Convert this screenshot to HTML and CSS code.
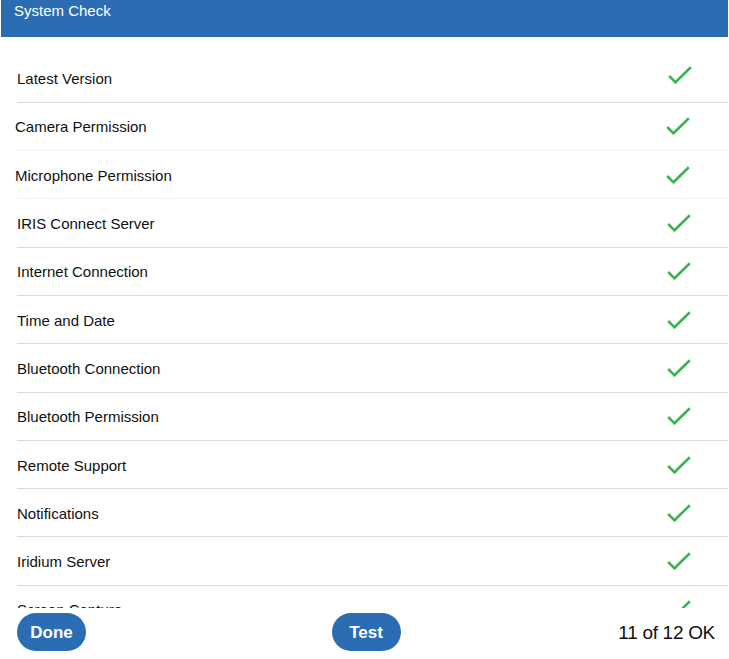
FILE: index.html
```html
<!DOCTYPE html>
<html lang="en">
<head>
<meta charset="utf-8">
<title>System Check</title>
<link rel="stylesheet" href="styles.css">
</head>
<body>
<div class="screen">
  <header class="titlebar"><span class="title">System Check</span></header>
  <ul class="checks">
    <li class="check-row first"><span class="label">Latest Version</span><svg class="tick" viewBox="0 0 24 18"><polyline points="1.2,10 7.5,16.3 22.8,1.2"/></svg></li>
    <li class="check-row shifted faint"><span class="label">Camera Permission</span><svg class="tick" viewBox="0 0 24 18"><polyline points="1.2,10 7.5,16.3 22.8,1.2"/></svg></li>
    <li class="check-row shifted faint"><span class="label">Microphone Permission</span><svg class="tick" viewBox="0 0 24 18"><polyline points="1.2,10 7.5,16.3 22.8,1.2"/></svg></li>
    <li class="check-row"><span class="label">IRIS Connect Server</span><svg class="tick" viewBox="0 0 24 18"><polyline points="1.2,10 7.5,16.3 22.8,1.2"/></svg></li>
    <li class="check-row"><span class="label">Internet Connection</span><svg class="tick" viewBox="0 0 24 18"><polyline points="1.2,10 7.5,16.3 22.8,1.2"/></svg></li>
    <li class="check-row"><span class="label">Time and Date</span><svg class="tick" viewBox="0 0 24 18"><polyline points="1.2,10 7.5,16.3 22.8,1.2"/></svg></li>
    <li class="check-row"><span class="label">Bluetooth Connection</span><svg class="tick" viewBox="0 0 24 18"><polyline points="1.2,10 7.5,16.3 22.8,1.2"/></svg></li>
    <li class="check-row"><span class="label">Bluetooth Permission</span><svg class="tick" viewBox="0 0 24 18"><polyline points="1.2,10 7.5,16.3 22.8,1.2"/></svg></li>
    <li class="check-row"><span class="label">Remote Support</span><svg class="tick" viewBox="0 0 24 18"><polyline points="1.2,10 7.5,16.3 22.8,1.2"/></svg></li>
    <li class="check-row"><span class="label">Notifications</span><svg class="tick" viewBox="0 0 24 18"><polyline points="1.2,10 7.5,16.3 22.8,1.2"/></svg></li>
    <li class="check-row"><span class="label">Iridium Server</span><svg class="tick" viewBox="0 0 24 18"><polyline points="1.2,10 7.5,16.3 22.8,1.2"/></svg></li>
    <li class="check-row"><span class="label">Screen Capture</span><svg class="tick" viewBox="0 0 24 18"><polyline points="1.2,10 7.5,16.3 22.8,1.2"/></svg></li>
  </ul>
  <footer class="actions">
    <button class="pill done">Done</button>
    <button class="pill test">Test</button>
    <span class="summary">11 of 12 OK</span>
  </footer>
</div>
</body>
</html>
```
FILE: styles.css
```css
html, body {
  margin: 0;
  padding: 0;
  background: #ffffff;
}

.screen {
  height: 659px;
  margin: 0 1px;
  display: flex;
  flex-direction: column;
  overflow: hidden;
  font-family: "Liberation Sans", Arial, sans-serif;
}

.titlebar {
  flex: 0 0 37px;
  box-sizing: border-box;
  background: #2a6db3;
  padding: 2px 13px 0;
}

.title {
  color: #ffffff;
  font-size: 15px;
  line-height: 18px;
}

.checks {
  flex: 1 1 auto;
  min-height: 0;
  overflow: hidden;
  list-style: none;
  margin: 0;
  padding: 17.5px 0 0 0;
}

.check-row {
  height: 48.3px;
  box-sizing: border-box;
  margin-left: 16px;
  padding-right: 37px;
  border-bottom: 1px solid #dadada;
  display: flex;
  align-items: center;
  justify-content: space-between;
}

.check-row.faint {
  border-bottom-color: #f1f1f1;
}

.label {
  font-size: 15px;
  color: #111111;
  line-height: 18px;
  padding-top: 2px;
}

.tick {
  width: 24px;
  height: 18px;
  fill: none;
  stroke: #3cb34f;
  stroke-width: 2.6;
  stroke-linejoin: miter;
}

.first .tick {
  margin-right: -1px;
  margin-bottom: 6px;
}

.shifted .label {
  margin-left: -2px;
}

.shifted .tick {
  margin-right: 1px;
}

.actions {
  flex: 0 0 51px;
  box-sizing: border-box;
  padding: 5px 13px 0 16px;
  display: grid;
  grid-template-columns: 1fr auto 1fr;
  align-items: start;
  background: #ffffff;
}

.pill {
  width: 69px;
  height: 38px;
  border: none;
  border-radius: 19px;
  background: #2a6db3;
  color: #ffffff;
  font-family: "Liberation Sans", Arial, sans-serif;
  font-weight: bold;
  font-size: 17px;
  padding: 2px 0 0 0;
}

.done {
  justify-self: start;
}

.test {
  justify-self: center;
}

.summary {
  justify-self: end;
  font-size: 19px;
  letter-spacing: -0.3px;
  color: #111111;
  line-height: 38px;
  padding-top: 1px;
}
```
